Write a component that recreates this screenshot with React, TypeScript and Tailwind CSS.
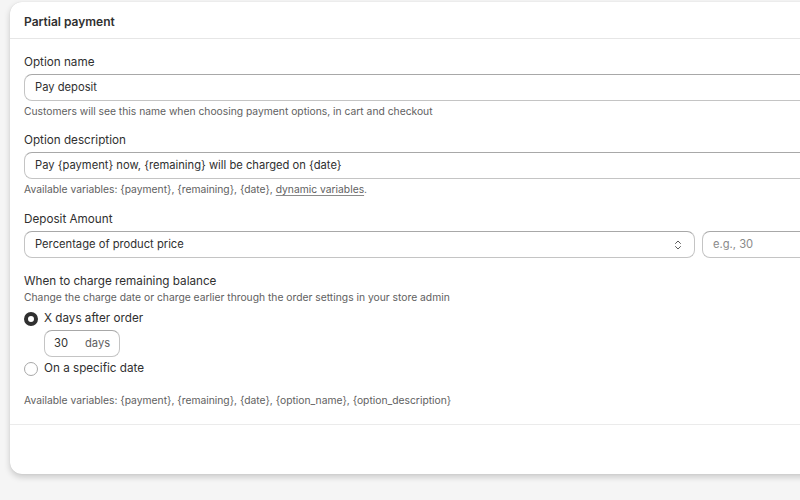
import React from "react";

const Help: React.FC<{ children: React.ReactNode; className?: string }> = ({ children, className = "" }) => (
  <p className={"text-[10.3px] leading-[14px] text-[#616161] " + className}>{children}</p>
);

const Label: React.FC<{ children: React.ReactNode }> = ({ children }) => (
  <div className="text-[11.7px] leading-4 text-[#303030] mb-1">{children}</div>
);

const TextBox: React.FC<{ value: string; className?: string; muted?: boolean }> = ({
  value,
  className = "",
  muted,
}) => (
  <div
    className={
      "h-[27px] flex items-center px-[10px] rounded-lg border border-[#c4c4c4] border-t-[#a8a8a8] bg-white text-[11.2px] " +
      (muted ? "text-[#8a8a8a] " : "text-[#303030] ") +
      className
    }
  >
    {value}
  </div>
);

const App: React.FC = () => {
  return (
    <div
      className="w-[800px] h-[500px] overflow-hidden bg-[#f5f5f5] pl-[10px] pt-[2px]"
      style={{ fontFamily: "Inter, 'Noto Sans', sans-serif" }}
    >
      <div className="w-[820px] h-[472px] bg-white rounded-xl shadow-[0_3px_6px_rgba(0,0,0,0.18),0_0_1px_rgba(0,0,0,0.15)] flex flex-col">
        <div className="h-[37px] flex items-center pt-[3px] px-[14px] border-b border-[#e6e6e6]">
          <h2 className="text-[12px] font-semibold text-[#303030]">Partial payment</h2>
        </div>

        <div className="pl-[14px] pt-[15px] pb-[17px] flex flex-col border-b border-[#ebebeb]">
          <Label>Option name</Label>
          <TextBox value="Pay deposit" className="rounded-r-none border-r-0" />
          <Help className="mt-[3px]">
            Customers will see this name when choosing payment options, in cart and checkout
          </Help>

          <div className="mt-[14px]">
            <Label>Option description</Label>
            <TextBox
              value="Pay {payment} now, {remaining} will be charged on {date}"
              className="rounded-r-none border-r-0"
            />
            <Help className="mt-[3px]">
              Available variables: {"{payment}"}, {"{remaining}"}, {"{date}"},{" "}
              <span className="underline decoration-[#8a8a8a] underline-offset-2">dynamic variables</span>.
            </Help>
          </div>

          <div className="mt-[15px]">
            <Label>Deposit Amount</Label>
            <div className="flex gap-[7px]">
              <div className="w-[671px] h-[27px] flex items-center justify-between pl-[10px] pr-[11px] rounded-lg border border-[#c4c4c4] border-t-[#a8a8a8] text-[11.2px] text-[#303030]">
                <span>Percentage of product price</span>
                <svg width="10" height="12" viewBox="0 0 10 12" fill="none" stroke="#5a5a5a" strokeWidth="1" strokeLinecap="round" strokeLinejoin="round">
                  <path d="M2.5 4.5 L5 2 L7.5 4.5" />
                  <path d="M2.5 7.5 L5 10 L7.5 7.5" />
                </svg>
              </div>
              <TextBox value="e.g., 30" muted className="flex-1 rounded-r-none border-r-0" />
            </div>
          </div>

          <div className="mt-[15px]">
            <Label>When to charge remaining balance</Label>
            <Help className="-mt-[3px]">
              Change the charge date or charge earlier through the order settings in your store admin
            </Help>
            <div className="flex items-center gap-[6px] mt-[5px] h-5">
              <span className="w-[14px] h-[14px] rounded-full border-[4px] border-[#303030] bg-white" />
              <span className="text-[11.7px] text-[#303030]">X days after order</span>
            </div>
            <div className="ml-[20px] mt-[1px] w-[76px] h-[27px] flex items-center gap-[17px] px-[9px] rounded-lg border border-[#c4c4c4] border-t-[#a8a8a8] text-[11.2px]">
              <span className="text-[#303030]">30</span>
              <span className="text-[#616161]">days</span>
            </div>
            <div className="flex items-center gap-[6px] mt-[2px] h-5">
              <span className="w-[14px] h-[14px] rounded-full border border-[#a8a8a8] bg-white" />
              <span className="text-[11.7px] text-[#303030]">On a specific date</span>
            </div>
            <Help className="mt-[14px]">
              Available variables: {"{payment}"}, {"{remaining}"}, {"{date}"}, {"{option_name}"},{" "}
              {"{option_description}"}
            </Help>
          </div>
        </div>
      </div>
    </div>
  );
};

export default App;
